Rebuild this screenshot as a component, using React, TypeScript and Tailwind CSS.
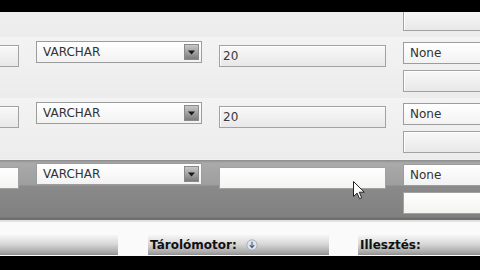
import React from "react";

type RowProps = {
  type?: string;
  length?: string;
  active?: boolean;
  blank?: boolean;
};

function TextField({ value, active }: { value?: string; active?: boolean }) {
  return (
    <div
      className={[
        "flex h-[22px] items-center border border-[#a2a2a2] pl-[3px] text-[12px] text-[#3a3a3a]",
        active
          ? "bg-[linear-gradient(to_bottom,#ffffff,#f3f3f0)]"
          : "bg-[linear-gradient(to_bottom,#f8f8f8,#e8e8e8)] shadow-[inset_1px_1px_0_#ffffff]",
      ].join(" ")}
    >
      {value}
    </div>
  );
}

function Select({ value, arrow = true, className = "" }: { value?: string; arrow?: boolean; className?: string }) {
  return (
    <div
      className={
        "flex h-[22px] items-center justify-between border border-[#9c9c9c] bg-[linear-gradient(to_bottom,#ffffff,#f2f2f2)] pl-[6px] pr-[2px] text-[12px] text-[#333] " +
        className
      }
    >
      <span>{value}</span>
      {arrow && (
        <span className="flex h-[16px] w-[15px] items-center justify-center border border-[#8a8a8a] bg-[linear-gradient(to_bottom,#c8c8c8,#7c7c7c)]">
          <svg width="7" height="5" viewBox="0 0 7 5">
            <path d="M0 0.5h7L3.5 4.5z" fill="#1a1a1a" />
          </svg>
        </span>
      )}
    </div>
  );
}

function Row({ type = "VARCHAR", length = "20", active, blank }: RowProps) {
  return (
    <div
      className={[
        "grid h-[61px] grid-cols-[167px_166px_167px_167px] gap-x-[17px]",
        active
          ? "bg-[linear-gradient(to_bottom,#f0f0f0_0px,#f0f0f0_1px,#8c8c8c_1px,#aaaaaa_4px,#9e9e9e_26px,#8a8a8a_27px,#808080_58px,#6e6e6e_59px,#6e6e6e_61px)]"
          : "bg-[linear-gradient(to_bottom,#f3f3f3,#ececec)]",
      ].join(" ")}
    >
      <div className="pt-[8px]">
        <TextField active={active} />
      </div>
      <div className="pt-[4px]">
        <Select value={blank ? "" : type} />
      </div>
      <div className="pt-[8px]">
        <TextField value={active || blank ? "" : length} active={active} />
      </div>
      <div className="flex flex-col gap-[6px] pt-[5px]">
        <Select value={blank ? "" : "None"} arrow={false} className="h-[21px]" />
        <TextField active={active} />
      </div>
    </div>
  );
}

function Cursor() {
  return (
    <svg className="absolute left-[353px] top-[181px]" width="12" height="19" viewBox="0 0 12 19">
      <path
        d="M0.5 0.5v15l3.6-3.4 2.4 5.6 2.2-1-2.4-5.5h5z"
        fill="#ffffff"
        stroke="#222222"
        strokeWidth="1"
        strokeLinejoin="round"
      />
    </svg>
  );
}

function Bar({ className = "", children }: { className?: string; children?: React.ReactNode }) {
  return (
    <div
      className={
        "flex h-[20px] items-center bg-[linear-gradient(to_bottom,#f6f6f6,#d8d8d8_45%,#a4a4a4_90%,#8c8c8c)] " +
        className
      }
    >
      {children}
    </div>
  );
}

export default function App() {
  return (
    <div className="relative h-[270px] w-[480px] overflow-hidden bg-black font-['DejaVu_Sans',sans-serif]">
      <div className="h-[12px] bg-black" />

      {/* table rows; the first one is mostly under the top black bar */}
      <div className="h-[208px] overflow-hidden bg-[#f0f0f0]">
        <div className="-ml-[148px] -mt-[36px] w-[720px]">
          <Row blank />
          <Row />
          <Row />
          <Row active />
        </div>
      </div>

      {/* footer labels */}
      <div className="flex h-[36px] flex-col bg-[#fafafa]">
        <div className="h-[2px] bg-[#e2e2e2]" />
        <div className="mt-auto mb-[1px] flex">
          <Bar className="w-[118px]" />
          <div className="w-[30px]" />
          <Bar className="w-[181px] pl-[2px]">
            <span className="text-[12px] font-bold text-[#111]">Tárolómotor:</span>
            <svg className="ml-[9px]" width="12" height="12" viewBox="0 0 12 12">
              <circle cx="6" cy="6" r="5.2" fill="#dfe3ea" stroke="#9aa3b3" strokeWidth="0.8" />
              <path d="M6 2.8v5.6M3.8 6.2L6 8.6l2.2-2.4" stroke="#4a5a7a" strokeWidth="1.1" fill="none" />
            </svg>
          </Bar>
          <div className="w-[29px]" />
          <Bar className="flex-1 pl-[2px]">
            <span className="text-[12px] font-bold text-[#111]">Illesztés:</span>
          </Bar>
        </div>
      </div>

      <div className="h-[14px] bg-black" />

      <Cursor />
    </div>
  );
}
